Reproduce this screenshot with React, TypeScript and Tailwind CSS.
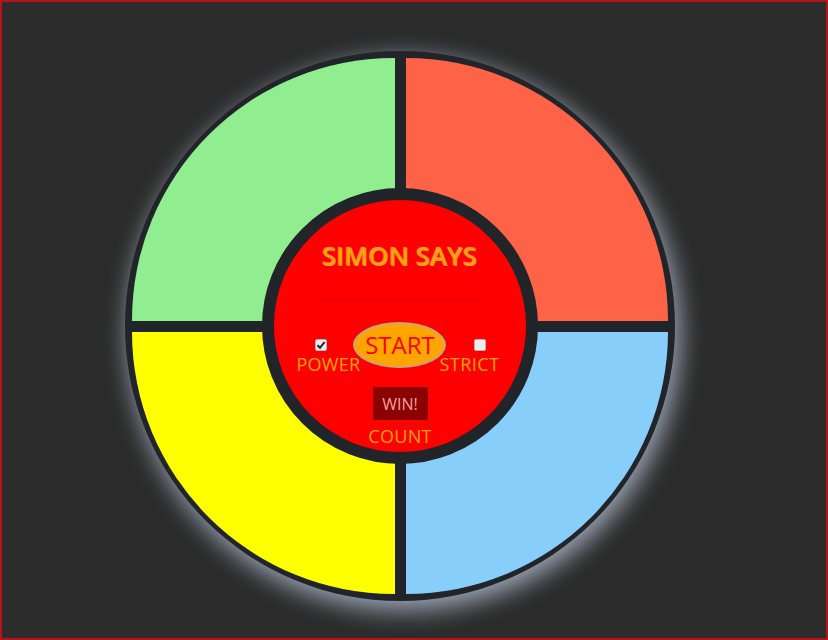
const Quadrant = ({ className }: { className: string }) => {
  return <div className={`w-full h-full ${className}`}></div>
}

const CheckBox = ({ checked }: { checked?: boolean }) => {
  return (
    <span className="w-[12px] h-[12px] bg-[#ececec] border border-[#b5b5b5] rounded-[2px] flex items-center justify-center">
      {checked && (
        <svg className="w-[10px] h-[10px]" viewBox="0 0 10 10" fill="none" stroke="#222" strokeWidth={2}>
          <path d="M1.5 5.2 L4 7.8 L8.6 2" />
        </svg>
      )}
    </span>
  )
}

const Console = () => {
  return (
    <div className="absolute left-1/2 top-1/2 -translate-x-1/2 -translate-y-1/2 w-[276px] h-[276px] rounded-full bg-[#ff0000] border-[12px] border-[#212429] flex flex-col items-center font-['Open_Sans',sans-serif] text-[#ffa500]">
      <h1 className="mt-[41px] text-[26px] leading-[30px] font-semibold [text-shadow:-1px_-1px_1px_rgba(255,225,170,0.7)]">SIMON SAYS</h1>
      <div className="mt-[28px] w-[160px] h-[2px] bg-[#e60000]"></div>
      <div className="mt-[21px] flex items-start">
        <div className="mt-[17px] -ml-[4px] flex flex-col items-center relative z-10">
          <span className="-ml-[14px]"><CheckBox checked /></span>
          <span className="mt-[3px] text-[18px] leading-[20px] tracking-[0.3px]">POWER</span>
        </div>
        <button className="-ml-[7px] -mr-[7px] w-[93px] h-[46px] rounded-[50%] bg-[#ffa500] border-2 border-[#c2a67c] text-[#ff0000] text-[24px] leading-[30px] flex items-center justify-center">
          START
        </button>
        <div className="mt-[17px] flex flex-col items-center relative z-10">
          <span className="ml-[20px]"><CheckBox /></span>
          <span className="mt-[3px] text-[18px] leading-[20px] tracking-[0.5px]">STRICT</span>
        </div>
      </div>
      <div className="mt-[13px] w-[55px] h-[33px] bg-[#8b0000] text-[#f4a0a0] text-[16px] flex items-center justify-center">
        WIN!
      </div>
      <span className="mt-[6px] text-[18px] leading-[20px] tracking-[0.3px]">COUNT</span>
    </div>
  )
}

export default function App() {
  return (
    <div className="w-full h-[640px] bg-[#2b2b2b] border-2 border-[#b3141a] pt-[49px] pl-[123px]">
      <div className="relative w-[550px] h-[550px] rounded-full bg-[#212429] p-[7px] grid grid-cols-2 grid-rows-2 gap-[11px] shadow-[4px_8px_24px_1px_rgba(185,198,218,0.8)]">
        <Quadrant className="bg-[#90ee90] rounded-tl-[262px]" />
        <Quadrant className="bg-[#ff6347] rounded-tr-[262px]" />
        <Quadrant className="bg-[#ffff00] rounded-bl-[262px]" />
        <Quadrant className="bg-[#87cefa] rounded-br-[262px]" />
        <Console />
      </div>
    </div>
  )
}
